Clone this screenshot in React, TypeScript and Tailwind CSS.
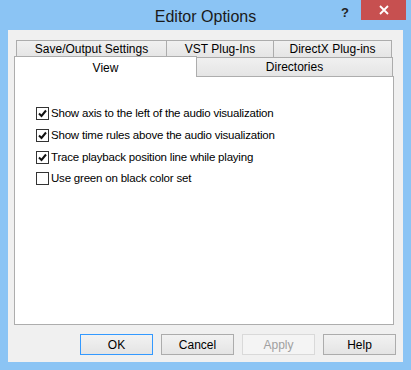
import React from "react";

const font = { fontFamily: '"Liberation Sans", Arial, sans-serif' };

function Check({ checked, label }: { checked: boolean; label: string }) {
  return (
    <div className="flex items-center h-[21.7px]">
      <div className="w-[13px] h-[13px] border border-[#333333] bg-white flex items-center justify-center">
        {checked && (
          <svg width="9" height="9" viewBox="0 0 9 9">
            <path d="M1 4.5 L3.5 7 L8 1.5" fill="none" stroke="#111" strokeWidth="2" />
          </svg>
        )}
      </div>
      <span className="ml-[2px] text-[11.5px] text-black tracking-[-0.2px]">{label}</span>
    </div>
  );
}

function Btn({ label, kind }: { label: string; kind?: "def" | "off" }) {
  const cls =
    kind === "def"
      ? "border-[#3399ff] text-black"
      : kind === "off"
      ? "border-[#d9d9d9] text-[#a0a0a0] bg-[#f4f4f4]"
      : "border-[#acacac] text-black";
  return (
    <div
      className={`w-[73px] h-[21px] border flex items-center justify-center text-[12px] ${
        kind === "off" ? "" : "bg-gradient-to-b from-[#f2f2f2] to-[#e4e4e4]"
      } ${cls}`}
    >
      {label}
    </div>
  );
}

const tab =
  "h-[18px] border border-[#acacac] bg-gradient-to-b from-[#f0f0f0] to-[#e5e5e5] flex items-center justify-center text-[12px] text-black";

export default function App() {
  return (
    <div className="w-[411px] h-[370px] bg-[#8bc4f4] flex flex-col" style={font}>
      <div className="h-[30px] grid grid-cols-[1fr_auto_1fr] items-start">
        <div />
        <div className="pt-[5px] text-[16px] text-[#1a1a1a]">Editor Options</div>
        <div className="flex justify-end items-start pr-[5px]">
          <span className="mt-[3px] mr-[12px] text-[13px] font-bold text-[#222]">?</span>
          <div className="w-[45px] h-[20px] bg-[#c75050] flex items-center justify-center">
            <svg width="10" height="10" viewBox="0 0 10 10">
              <path d="M1 1 L9 9 M9 1 L1 9" stroke="white" strokeWidth="1.8" />
            </svg>
          </div>
        </div>
      </div>
      <div className="mx-[8px] mb-[8px] flex-1 bg-[#f0f0f0] flex flex-col">
        <div className="pt-[10px] pl-[8px] flex flex-col">
          <div className="flex">
            <div className={`${tab} w-[151px]`}>Save/Output Settings</div>
            <div className={`${tab} w-[108px] -ml-px`}>VST Plug-Ins</div>
            <div className={`${tab} w-[119px] -ml-px`}>DirectX Plug-ins</div>
          </div>
          <div className="flex -mt-px">
            <div className="relative z-10 -ml-[2px] -mt-[1px] w-[183px] h-[21px] border border-b-0 border-[#adadad] bg-white flex justify-center pt-[2px] text-[12px] text-black">
              View
            </div>
            <div className={`${tab} w-[197px] -ml-px h-[20px]`}>Directories</div>
          </div>
        </div>
        <div className="ml-[6px] -mt-px w-[380px] h-[249px] border border-[#adadad] bg-white pt-[26px] pl-[21px] flex flex-col">
          <Check checked label="Show axis to the left of the audio visualization" />
          <Check checked label="Show time rules above the audio visualization" />
          <Check checked label="Trace playback position line while playing" />
          <Check checked={false} label="Use green on black color set" />
        </div>
        <div className="mt-[9px] flex justify-end gap-[8px] pr-[7px]">
          <Btn label="OK" kind="def" />
          <Btn label="Cancel" />
          <Btn label="Apply" kind="off" />
          <Btn label="Help" />
        </div>
      </div>
    </div>
  );
}
